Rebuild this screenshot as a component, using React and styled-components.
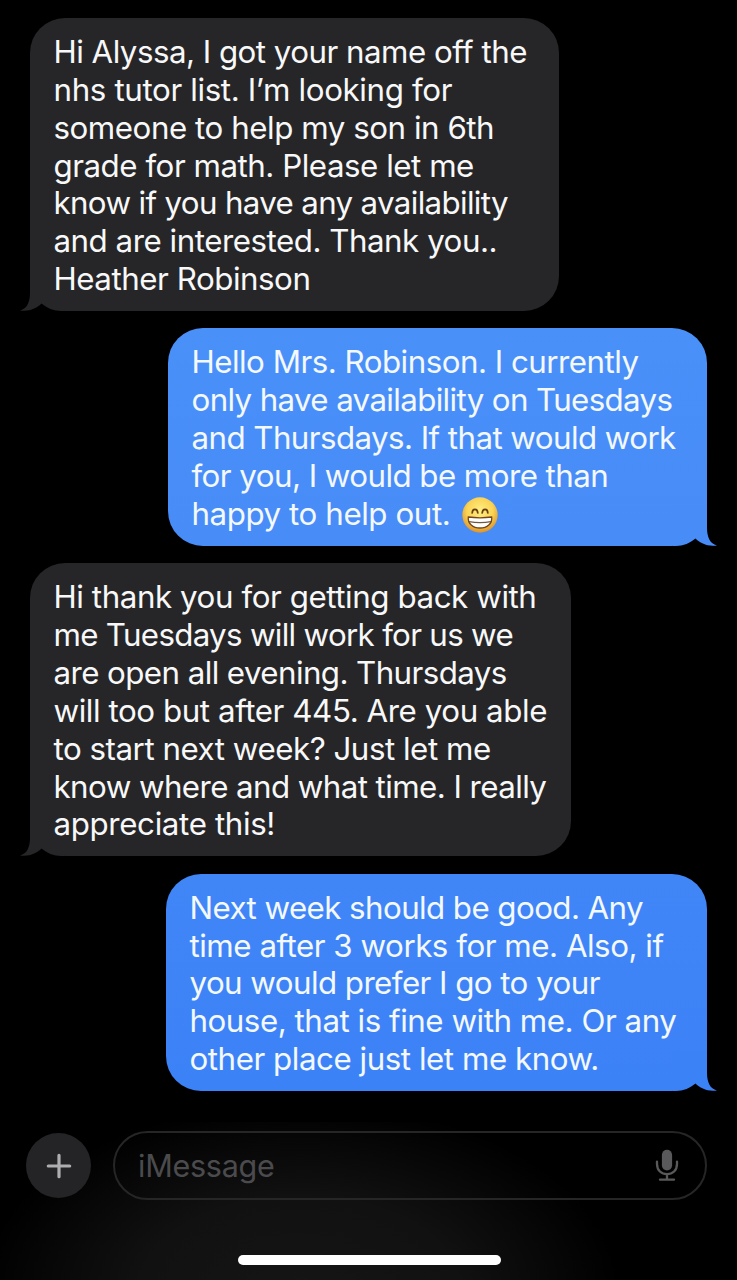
import React from 'react'
import styled, { createGlobalStyle } from 'styled-components'

const GlobalStyle = createGlobalStyle`
	body {
		margin: 0;
		background-color: #000;
	}
`

const Screen = styled.div`
	box-sizing: border-box;
	width: 737px;
	height: 1280px;
	padding-top: 18px;
	display: flex;
	flex-direction: column;
	background-color: #000;
	overflow: hidden;
	font-family: Inter, 'Liberation Sans', sans-serif;
`

const Thread = styled.main`
	height: 1104px;
	display: flex;
	flex-direction: column;
	gap: 17.4px;
	padding: 0 30px 0 30px;
`

const Bubble = styled.div`
	position: relative;
	isolation: isolate;
	box-sizing: border-box;
	width: ${props => props.$width}px;
	align-self: ${props => (props.$sent ? 'flex-end' : 'flex-start')};
	padding: 16px 0 12.2px 23.5px;
	border-radius: 35px;
	background: ${props => props.$fill};
	color: ${props => (props.$sent ? '#f4f8ff' : '#f8f8f9')};
`

const Line = styled.div`
	display: flex;
	align-items: center;
	height: 37.85px;
	font-size: 31.3px;
	line-height: 37.85px;
	white-space: pre;
	letter-spacing: ${props => props.$spacing}px;
`

const TailShape = styled.svg`
	position: absolute;
	z-index: -1;
	bottom: 0;
	${props => (props.$sent ? 'right: -10px;' : 'left: -10px;')}
	transform: ${props => (props.$sent ? 'scaleX(-1)' : 'none')};
`

const EmojiShape = styled.svg`
	margin-left: 12px;
`

const Composer = styled.footer`
	box-sizing: border-box;
	height: 158px;
	padding: 9px 30px 0 26px;
	display: flex;
	flex-direction: column;
	background: radial-gradient(
		ellipse 320px 190px at 300px 170px,
		#151516 0%,
		#111112 50%,
		#000 100%
	);
`

const ComposerRow = styled.div`
	display: flex;
	align-items: center;
	gap: 22px;
`

const AddButton = styled.button`
	width: 65px;
	height: 65px;
	padding: 0;
	border: 0;
	border-radius: 50%;
	background-color: #242426;
	display: flex;
	align-items: center;
	justify-content: center;
`

const Field = styled.div`
	box-sizing: border-box;
	flex: 1;
	height: 69px;
	padding: 0 26px 0 23px;
	border: 2px solid #262627;
	border-radius: 35px;
	display: flex;
	align-items: center;
	justify-content: space-between;
`

const Placeholder = styled.span`
	color: #4b4b4d;
	font-size: 30.5px;
	letter-spacing: -0.25px;
`

const HomeIndicator = styled.div`
	width: 263px;
	height: 10px;
	margin: 55px 0 0 212px;
	border-radius: 5px;
	background-color: #fff;
`

const Tail = ({ sent, color }) => (
	<TailShape $sent={sent} width="44" height="40" viewBox="0 0 44 40" aria-hidden="true">
		<path
			fill={color}
			d="M10 0V22C10 31 7 38 0 39.4C9 41 17 37 21.5 32.5C27 37 33 40 42 40H44V0Z"
		/>
	</TailShape>
)

const GrinEmoji = () => (
	<EmojiShape width="36" height="36" viewBox="0 0 36 36" role="img">
		<defs>
			<radialGradient id="face" cx="50%" cy="38%" r="62%">
				<stop offset="0" stopColor="#fff084" />
				<stop offset=".6" stopColor="#fad354" />
				<stop offset="1" stopColor="#dd922c" />
			</radialGradient>
		</defs>
		<circle cx="18" cy="18" r="17.7" fill="url(#face)" />
		<path
			d="M10.2 16C10.4 11.2 15.4 11.2 15.8 16M20.2 16C20.6 11.2 25.6 11.2 25.8 16"
			fill="none"
			stroke="#6b3f12"
			strokeWidth="1.7"
			strokeLinecap="round"
		/>
		<path
			d="M6.3 20Q18 21.6 29.7 20C30.6 26.5 25 31 18 31S5.4 26.5 6.3 20Z"
			fill="#fff"
			stroke="#74451b"
			strokeWidth="1.3"
		/>
		<path d="M7 24.6Q18 26.8 29 24.6" fill="none" stroke="#74553d" strokeWidth="1.3" />
	</EmojiShape>
)

const PlusIcon = () => (
	<svg width="26" height="26" viewBox="0 0 26 26">
		<path d="M13 2.3V23.7M2.3 13H23.7" stroke="#aeaeb0" strokeWidth="3.2" strokeLinecap="round" />
	</svg>
)

const MicIcon = () => (
	<svg width="24" height="34" viewBox="0 0 24 34">
		<rect x="6.9" y="0.8" width="10.2" height="20.6" rx="5.1" fill="#59595b" />
		<path
			d="M2 12.6V15C2 21.5 6.5 25.2 12 25.2S22 21.5 22 15V12.6M12 25.6V30M5 30.7H19"
			fill="none"
			stroke="#59595b"
			strokeWidth="2.3"
			strokeLinecap="round"
		/>
	</svg>
)

// each line: text, letter spacing, trailing emoji
const messages = [
	{
		width: 528.5,
		fill: '#262628',
		tail: '#262628',
		lines: [
			['Hi Alyssa, I got your name off the', -0.52],
			['nhs tutor list. I’m looking for', -0.36],
			['someone to help my son in 6th', -0.46],
			['grade for math. Please let me', -0.475],
			['know if you have any availability', -0.66],
			['and are interested. Thank you..', -0.48],
			['Heather Robinson', -0.47]
		]
	},
	{
		sent: true,
		width: 539,
		fill: 'linear-gradient(#4a90f9, #478cf7)',
		tail: '#478cf7',
		lines: [
			['Hello Mrs. Robinson. I currently', -0.51],
			['only have availability on Tuesdays', -0.64],
			['and Thursdays. If that would work', -0.57],
			['for you, I would be more than', -0.55],
			['happy to help out.', -0.43, true]
		]
	},
	{
		width: 541,
		fill: '#262628',
		tail: '#262628',
		lines: [
			['Hi thank you for getting back with', -0.43],
			['me Tuesdays will work for us we', -0.7],
			['are open all evening. Thursdays', -0.58],
			['will too but after 445. Are you able', -0.43],
			['to start next week? Just let me', -0.48],
			['know where and what time. I really', -0.58],
			['appreciate this!', -0.36]
		]
	},
	{
		sent: true,
		width: 541,
		fill: 'linear-gradient(#4086f7, #3c82f7)',
		tail: '#3c82f7',
		lines: [
			['Next week should be good. Any', -0.58],
			['time after 3 works for me. Also, if', -0.48],
			['you would prefer I go to your', -0.56],
			['house, that is fine with me. Or any', -0.47],
			['other place just let me know.', -0.46]
		]
	}
]

const App = () => {
	return (
		<Screen>
			<GlobalStyle />
			<Thread>
				{messages.map((message, index) => (
					<Bubble
						key={index}
						$sent={message.sent}
						$width={message.width}
						$fill={message.fill}
					>
						<Tail sent={message.sent} color={message.tail} />
						{message.lines.map(([text, spacing, emoji]) => (
							<Line key={text} $spacing={spacing}>
								{text}
								{emoji && <GrinEmoji />}
							</Line>
						))}
					</Bubble>
				))}
			</Thread>
			<Composer>
				<ComposerRow>
					<AddButton>
						<PlusIcon />
					</AddButton>
					<Field>
						<Placeholder>iMessage</Placeholder>
						<MicIcon />
					</Field>
				</ComposerRow>
				<HomeIndicator />
			</Composer>
		</Screen>
	)
}

export default App
